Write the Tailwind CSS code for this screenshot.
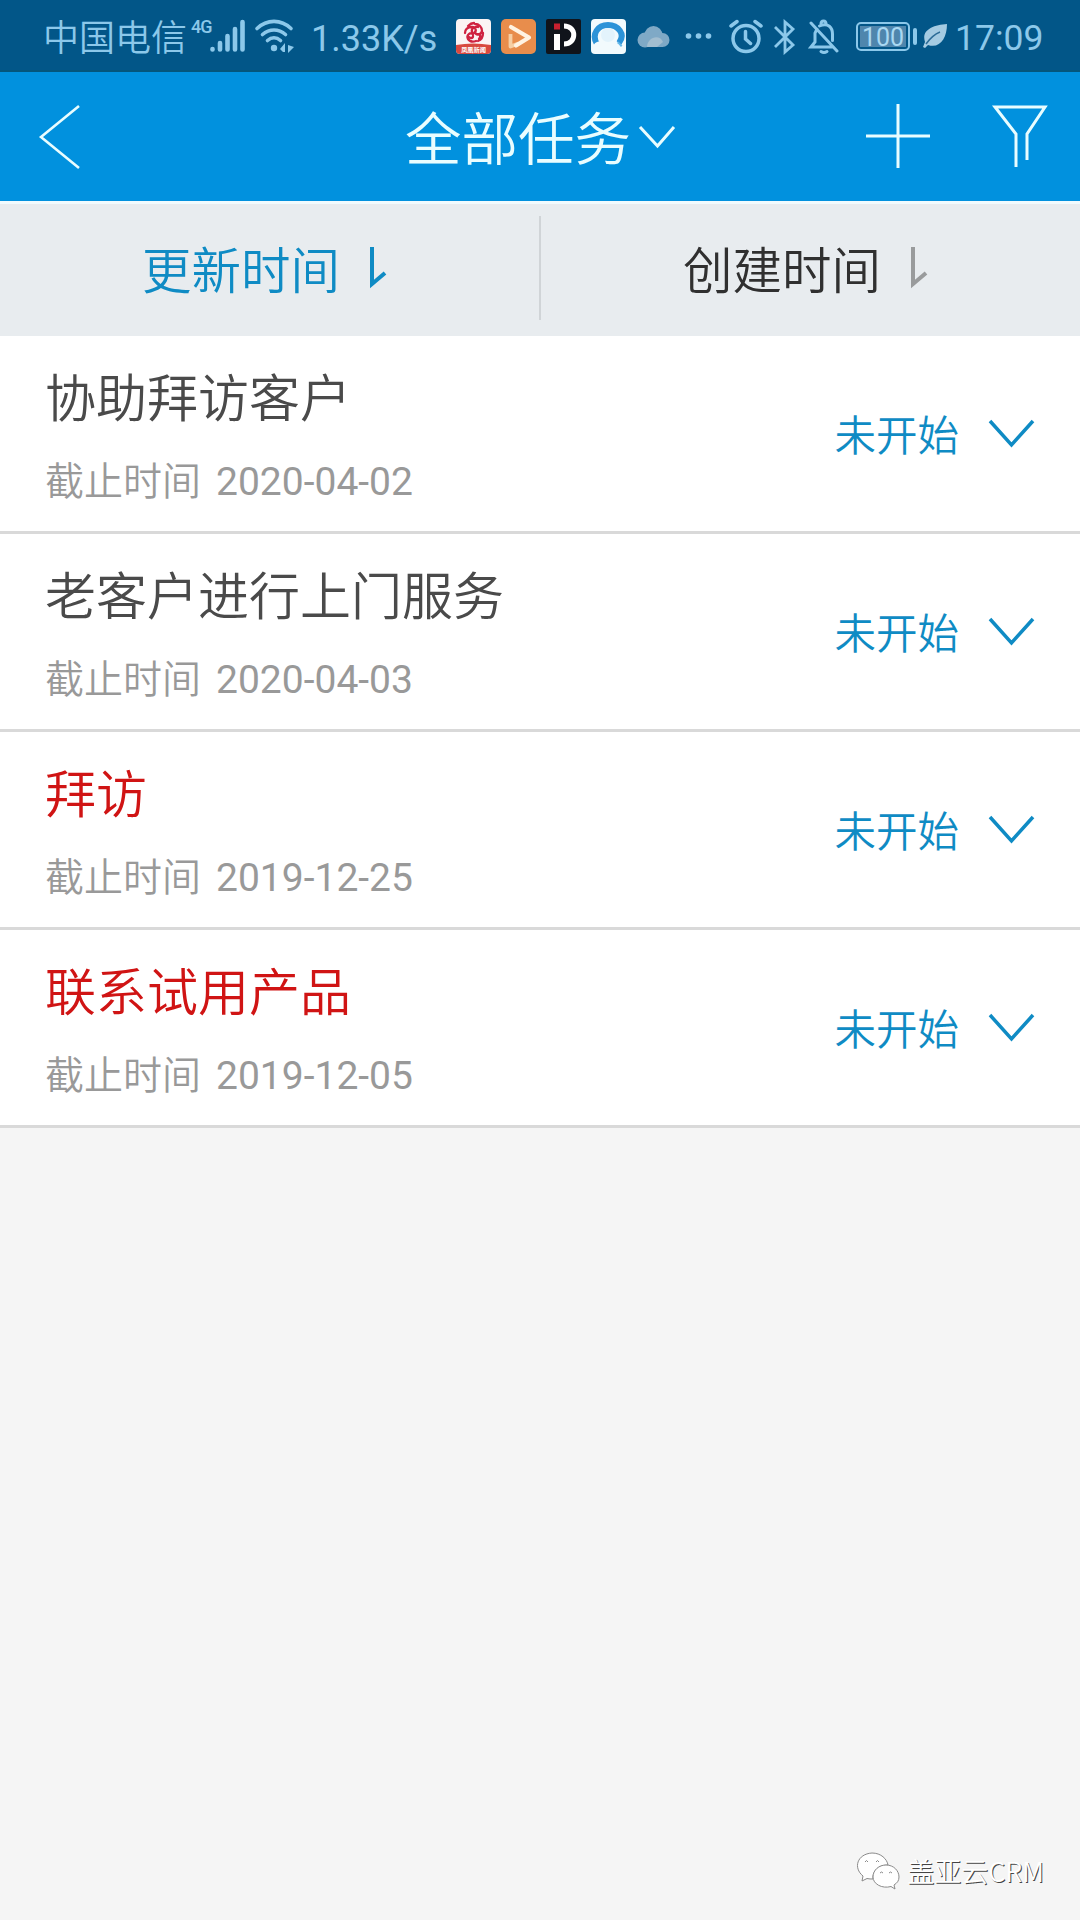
<!DOCTYPE html>
<html lang="zh-CN">
<head>
<meta charset="utf-8">
<title>全部任务</title>
<script src="https://cdn.jsdelivr.net/npm/@tailwindcss/browser@4"></script>
</head>
<body class="bg-[#f5f5f5] font-['Roboto','Noto_Sans_CJK_SC',sans-serif] font-[350]">
<div class="w-[1080px] h-[1920px] flex flex-col overflow-hidden">

  <!-- status bar -->
  <div class="h-[72px] shrink-0 bg-[#025688] text-[#8cc8ea] flex items-center whitespace-nowrap leading-none border-b-2 border-[#04567c]">
    <span class="ml-[43px] w-[144px] pt-[7px] text-[36px]">中国电信</span>
    <span class="ml-[4px] w-[19px] text-[18px] font-medium tracking-[-1px] self-start mt-[18px]">4G</span>
    <svg class="w-[38px] h-[36px] mt-[2px]" viewBox="0 0 38 36" stroke="currentColor" stroke-width="4.6" stroke-linecap="round"><path d="M2.5 31v.5M10 25v6.500M17.500 18v13.500M25 11v20.500M32.500 4v27.500"/></svg>
    <svg class="ml-[6px] w-[42px] h-[36px] mt-[3px]" viewBox="0 0 42 36" fill="none" stroke="currentColor" stroke-width="3.600" stroke-linecap="round"><path d="M3 9.500C13 0 27 0 37 9.500M8.500 15.500c7-6 16-6 23 0M13.500 21.500c4-3.500 9-3.500 13 0"/><circle cx="20" cy="29" r="3.200" fill="currentColor" stroke="none"/><path d="M31 24v9h-2l-3-3zM34 26l6 2-6 6z" fill="currentColor" stroke="none"/></svg>
    <span class="ml-[15px] w-[127px] pt-[7px] text-[36px] font-normal">1.33K/s</span>
    <div class="ml-[18px] pt-[2px] flex gap-[10px]">
      <svg class="size-[35px]" viewBox="0 0 35 35"><rect width="35" height="35" rx="4" fill="#fbf4f4"/><g fill="none" stroke="#cf2240" stroke-width="2.300" stroke-linecap="round"><path d="M18 14c3-2 2-6-2-6-5 0-7 3-7 6M17 15c-3-2-7 1-5 5 2 3 5 3 8 2M19 13c1 4 6 3 7-1 0-4-3-7-7-7M16 13c-1-3 2-6 6-5M20 15c3 0 6 1 3 5M17 17c0 3-3 2-4 1M12 7c2-2 4-3 6-3M27 14c0 4-2 7-5 8"/></g><path d="M0 26q17-3 35 0v5q0 4-4 4H4q-4 0-4-4z" fill="#d8493f"/><text x="17.500" y="33" font-size="6.200" fill="#fff" text-anchor="middle" font-weight="700">凤凰新闻</text></svg>
      <svg class="size-[35px]" viewBox="0 0 35 35"><rect width="35" height="35" rx="5" fill="#e88d4c"/><path d="M9.500 15v12.500l8-3" fill="none" stroke="#f6cfa4" stroke-width="3.800" stroke-linejoin="round"/><path d="M10 8l18 10.500L15 26.500" fill="none" stroke="#fff3e2" stroke-width="4.200" stroke-linecap="round" stroke-linejoin="round"/></svg>
      <svg class="size-[35px]" viewBox="0 0 35 35"><rect width="35" height="35" rx="2" fill="#10141b"/><rect x="8" y="4.500" width="6" height="6" fill="#c9202f"/><path d="M8 15h6v16H8z" fill="#fff"/><path d="M18 7c13 0 13 18 0 18" fill="none" stroke="#fff" stroke-width="5"/></svg>
      <svg class="size-[35px]" viewBox="0 0 35 35"><rect width="35" height="35" rx="4" fill="#f2fafd"/><path d="M6 25C0 15 7 6 17 6s18 9 11 18" fill="none" stroke="#2c93d8" stroke-width="6"/><path d="M26 24l4 4" stroke="#63b7e8" stroke-width="4"/><path d="M2 30c0-8 7-9 12-6 5-4 13-2 17 6v2H3z" fill="#f2fafd"/><circle cx="17" cy="16" r="7" fill="#e3f3fc"/></svg>
    </div>
    <svg class="ml-[11px] mt-[3px] w-[34px] h-[24px]" viewBox="0 0 34 24"><g fill="#7fa9c6"><circle cx="8" cy="15" r="7.500"/><circle cx="16.500" cy="10" r="9"/><circle cx="25.500" cy="15" r="7"/><path d="M8 13h18v9H8z"/></g><path d="M10 22c0-9 12-14 16-5l-6 5z" fill="#a3bed0"/></svg>
    <svg class="ml-[13px] mt-[2px] w-[30px] h-[8px]" viewBox="0 0 30 8" fill="currentColor"><circle cx="4.500" cy="4" r="2.800"/><circle cx="14.500" cy="4" r="2.800"/><circle cx="24.500" cy="4" r="2.800"/></svg>
    <svg class="ml-[15px] w-[34px] h-[36px] mt-[3px]" viewBox="0 0 34 36" fill="none" stroke="currentColor" stroke-width="3.500" stroke-linecap="round"><circle cx="17" cy="19.500" r="13"/><path d="M2 7l6-4.500M32 7l-6-4.500M16.500 12.500V20l5 4.500"/></svg>
    <svg class="ml-[10px] w-[24px] h-[36px] mt-[3px]" viewBox="0 0 24 36" fill="none" stroke="currentColor" stroke-width="2.800"><path d="M2 8l18 18-8 7V3l8 7L2 28"/></svg>
    <svg class="ml-[11px] w-[32px] h-[36px] mt-[3px]" viewBox="0 0 32 36" fill="none" stroke="currentColor" stroke-width="3" stroke-linecap="round"><path d="M3 4l26 28M24 28H3l4-5V14l2-4M11.500 7c9-4 13 2 13 8v6.500"/><path d="M13 5c0-4 5-4 5 0" /><path d="M13 32.500q3 2 6 0"/></svg>
    <div class="ml-[16px] mt-[3px] w-[54px] h-[29px] rounded-[5px] border-2 border-[#8cc8ea] p-[2px]"><div class="bg-[#4f86ad] h-full text-[25px] font-normal leading-[23px] text-center text-[#a9d8f2]">100</div></div>
    <div class="ml-[3px] mt-[3px] w-[4px] h-[17px] bg-[#8cc8ea] rounded-sm"></div>
    <svg class="ml-[6px] mt-[2px] w-[25px] h-[26px]" viewBox="0 0 25 26"><path d="M24 1C10 2-2 7 2 19l-2 5 2 1 3-3c12 4 19-7 19-21z" fill="#a5cbe2"/><path d="M3 21C8 14 12 11 17 9" stroke="#2d6c97" stroke-width="1.500" fill="none"/></svg>
    <span class="ml-[7px] pt-[7px] text-[35.500px] font-normal">17:09</span>
  </div>

  <!-- title bar -->
  <div class="h-[129px] shrink-0 bg-[#0191de] text-[#e9fdff] grid grid-cols-[1fr_auto_1fr] items-center">
    <svg class="ml-[38px] w-[44px] h-[68px]" viewBox="0 0 44 68" fill="none" stroke="currentColor" stroke-width="2.600"><path d="M41 3L3 34l38 31"/></svg>
    <div class="flex items-center pl-[2px]">
      <h1 class="text-[56.500px] leading-[64px] pb-[3px] font-['Noto_Sans_CJK_SC',sans-serif]">全部任务</h1>
      <svg class="ml-[6px] w-[40px] h-[26px]" viewBox="0 0 40 26" fill="none" stroke="currentColor" stroke-width="3"><path d="M3 3l17.500 19L37 3"/></svg>
    </div>
    <div class="flex justify-end items-center gap-[60px] pr-[31px] pb-[1px]">
      <svg class="w-[66px] h-[66px]" viewBox="0 0 66 66" stroke="currentColor" stroke-width="3"><path d="M1 33h64M33 1v64"/></svg>
      <svg class="w-[58px] h-[66px]" viewBox="0 0 58 66" fill="none" stroke="currentColor" stroke-width="3"><path d="M25 64V31L4 4h50L36 31v26"/></svg>
    </div>
  </div>

  <!-- sort tabs -->
  <div class="h-[135px] shrink-0 bg-[#e8ecef] border-t-3 border-[#f1fbfe] pb-[4px] flex items-center font-['Noto_Sans_CJK_SC',sans-serif] text-[49.500px] leading-[60px]">
    <div class="flex-1 h-[104px] flex items-center pl-[142px] text-[#0f8bc4] border-r-2 border-[#d0d4d7]">更新时间
      <svg class="ml-[28px] w-[20px] h-[44px]" viewBox="0 0 20 44" fill="none" stroke="currentColor" stroke-width="4"><path d="M4 1v37L17 27"/></svg>
    </div>
    <div class="flex-1 h-[104px] flex items-center pl-[142px] text-[#303030]">创建时间
      <svg class="ml-[28px] w-[20px] h-[44px] text-[#999b9c]" viewBox="0 0 20 44" fill="none" stroke="currentColor" stroke-width="4"><path d="M4 1v37L17 27"/></svg>
    </div>
  </div>

  <!-- task list -->
  <ul class="shrink-0 flex flex-col">
    <li class="h-[198px] bg-white border-b-3 border-[#d9d9d9] flex items-center justify-between pl-[45px] pr-[45px]">
      <div class="flex flex-col gap-[22px] pt-[11px]">
        <h2 class="text-[51px] leading-[64px] text-[#4a4a4a]">协助拜访客户</h2>
        <p class="text-[39px] leading-[56px] text-[#999] flex gap-[15px]"><span>截止时间</span><span class="font-normal">2020-04-02</span></p>
      </div>
      <div class="flex items-center gap-[29px] text-[#0f8bc4]"><span class="text-[41.500px] leading-[60px] pt-[7px]">未开始</span><svg class="w-[47px] h-[30px]" viewBox="0 0 47 30" fill="none" stroke="currentColor" stroke-width="3.500"><path d="M2 2l21.500 24L45 2"/></svg></div>
    </li>
    <li class="h-[198px] bg-white border-b-3 border-[#d9d9d9] flex items-center justify-between pl-[45px] pr-[45px]">
      <div class="flex flex-col gap-[22px] pt-[11px]">
        <h2 class="text-[51px] leading-[64px] text-[#4a4a4a]">老客户进行上门服务</h2>
        <p class="text-[39px] leading-[56px] text-[#999] flex gap-[15px]"><span>截止时间</span><span class="font-normal">2020-04-03</span></p>
      </div>
      <div class="flex items-center gap-[29px] text-[#0f8bc4]"><span class="text-[41.500px] leading-[60px] pt-[7px]">未开始</span><svg class="w-[47px] h-[30px]" viewBox="0 0 47 30" fill="none" stroke="currentColor" stroke-width="3.500"><path d="M2 2l21.500 24L45 2"/></svg></div>
    </li>
    <li class="h-[198px] bg-white border-b-3 border-[#d9d9d9] flex items-center justify-between pl-[45px] pr-[45px]">
      <div class="flex flex-col gap-[22px] pt-[11px]">
        <h2 class="text-[51px] leading-[64px] text-[#d01414]">拜访</h2>
        <p class="text-[39px] leading-[56px] text-[#999] flex gap-[15px]"><span>截止时间</span><span class="font-normal">2019-12-25</span></p>
      </div>
      <div class="flex items-center gap-[29px] text-[#0f8bc4]"><span class="text-[41.500px] leading-[60px] pt-[7px]">未开始</span><svg class="w-[47px] h-[30px]" viewBox="0 0 47 30" fill="none" stroke="currentColor" stroke-width="3.500"><path d="M2 2l21.500 24L45 2"/></svg></div>
    </li>
    <li class="h-[198px] bg-white border-b-3 border-[#d9d9d9] flex items-center justify-between pl-[45px] pr-[45px]">
      <div class="flex flex-col gap-[22px] pt-[11px]">
        <h2 class="text-[51px] leading-[64px] text-[#d01414]">联系试用产品</h2>
        <p class="text-[39px] leading-[56px] text-[#999] flex gap-[15px]"><span>截止时间</span><span class="font-normal">2019-12-05</span></p>
      </div>
      <div class="flex items-center gap-[29px] text-[#0f8bc4]"><span class="text-[41.500px] leading-[60px] pt-[7px]">未开始</span><svg class="w-[47px] h-[30px]" viewBox="0 0 47 30" fill="none" stroke="currentColor" stroke-width="3.500"><path d="M2 2l21.500 24L45 2"/></svg></div>
    </li>
  </ul>

  <!-- account signature -->
  <div class="mt-auto mb-[30px] pr-[36px] flex justify-end items-center gap-[7px]">
    <svg class="w-[44px] h-[38px]" viewBox="0 0 44 38" fill="#fff" stroke="#8a8a8a" stroke-width="1"><path d="M6 29l1-5C-3 16 1 2 16 1c9 0 15 6 16 12-9 0-16 6-15 14-2 0-4 0-6-.500z"/><path d="M39 37l-4-2.500C26 37 17 32 17 25c0-7 6-12 13-12 8 0 13 6 13 12 0 4-2 6-5 8z"/><path d="M9 10q1.500-3 3 0M20 10q1.500-3 3 0M24 21q1.500-2 3 0M33 21q1.500-2 3 0" fill="none"/></svg>
    <span class="text-[27px] leading-[36px] font-['Noto_Sans_CJK_SC',sans-serif] text-white [text-shadow:1px_1px_0_#444]">盖亚云CRM</span>
  </div>
</div>
</body>
</html>
